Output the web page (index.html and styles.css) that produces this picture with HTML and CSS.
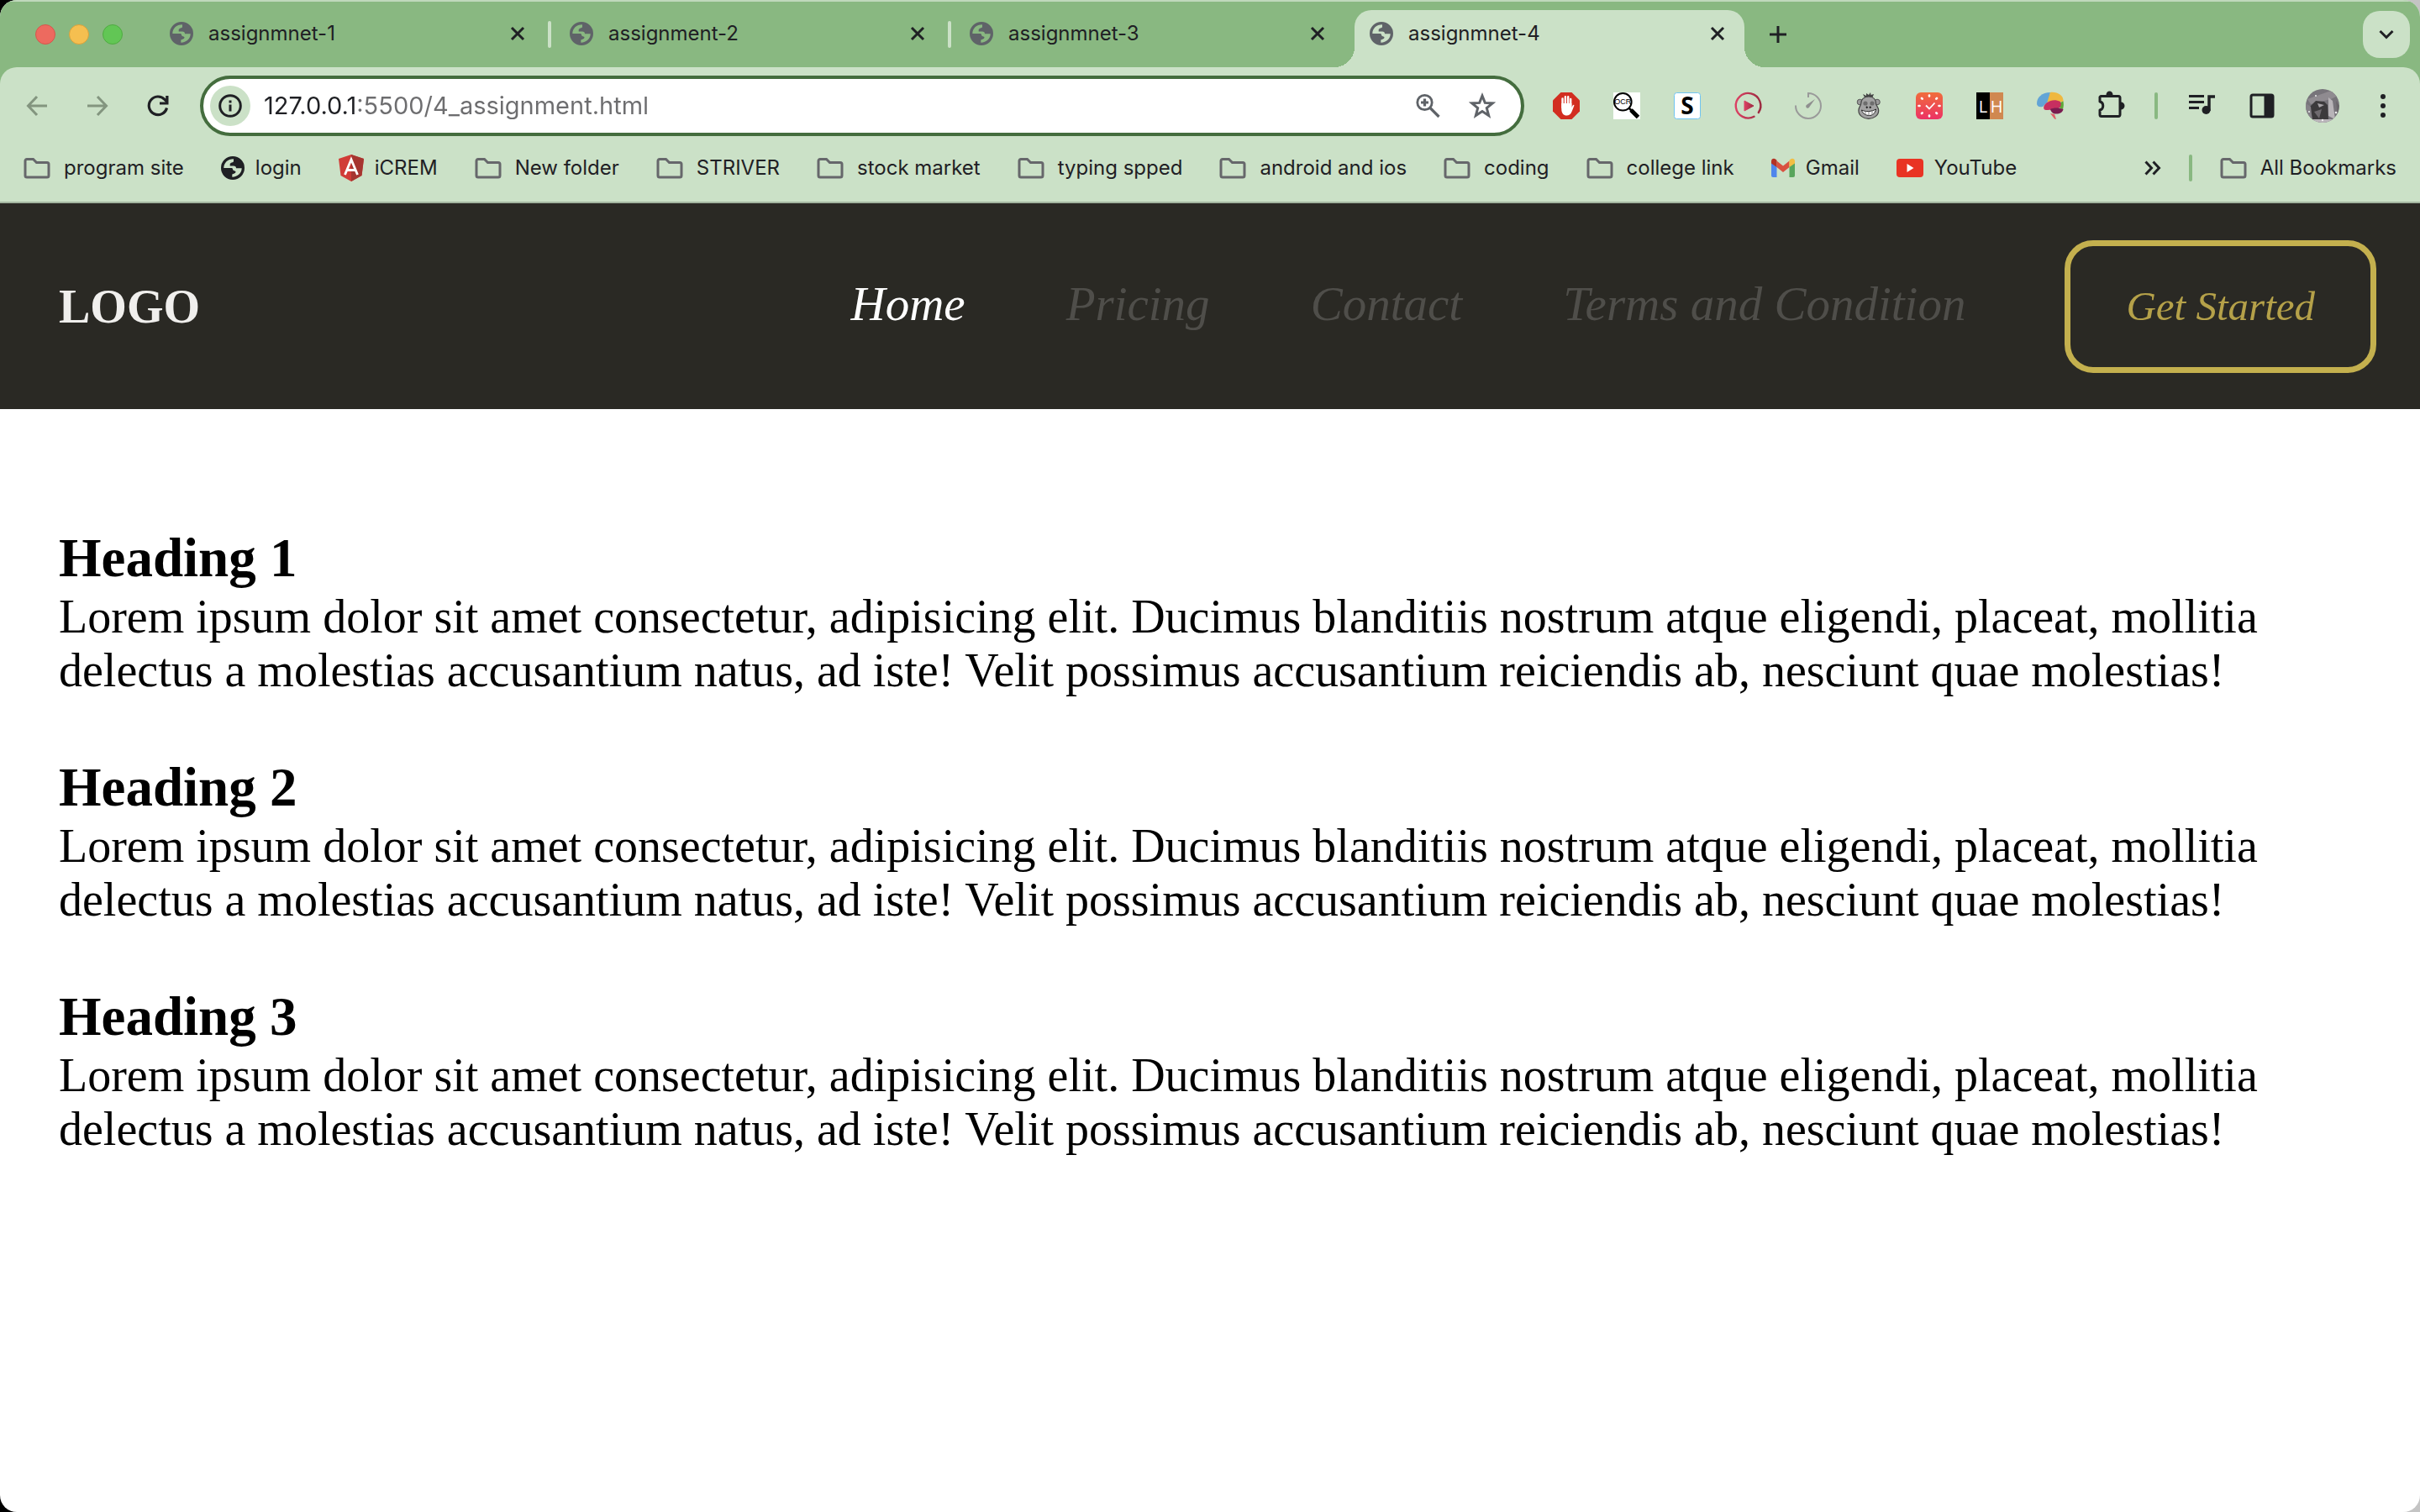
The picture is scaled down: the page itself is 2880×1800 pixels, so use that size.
FILE: index.html
```html
<!DOCTYPE html>
<html lang="en">
<head>
<meta charset="utf-8">
<title>assignmnet-4</title>
<link rel="stylesheet" href="styles.css">
</head>
<body>
<svg class="defs" aria-hidden="true">
  <defs>
    <linearGradient id="sunset" x1="0" y1="0" x2="0" y2="1"><stop offset="0" stop-color="#f06d3c"/><stop offset="1" stop-color="#ec3265"/></linearGradient>
    <linearGradient id="berry"><stop offset="0" stop-color="#dc4164"/><stop offset="1" stop-color="#9c2a40"/></linearGradient>
  </defs>
  <symbol id="globe" viewBox="0 0 28 28"><path fill="currentColor" fill-rule="evenodd" d="M14 0a14 14 0 1 1 0 28 14 14 0 0 1 0-28zM3.300 14C3.300 8 8 3.300 15 3.300V6c0 2-4 1-4.300 3.500v2H15c2 0 3 1 3 2.800h6.700c0 5.700-4.700 10.400-11.400 10.400V22c0-1.500 4.200-1 4.200-3.500 0-1.500-3.500-1-3.500-3 0-1.500-1-1.500-2-1.500z"/></symbol>
  <symbol id="close" viewBox="0 0 20 20"><path d="M3 3l14 14M17 3L3 17" fill="none" stroke="currentColor" stroke-width="3"/></symbol>
  <symbol id="folder" viewBox="0 0 32 26"><path d="M4 2.500h7.500l4 4H28a2 2 0 0 1 2 2V22a2 2 0 0 1-2 2H4a2 2 0 0 1-2-2V4.500a2 2 0 0 1 2-2z" fill="none" stroke="currentColor" stroke-width="3"/></symbol>
</svg>

<div class="window">
  <header class="chrome">
    <div class="tabstrip">
      <div class="lights">
        <button class="light red" aria-label="Close window"></button>
        <button class="light yellow" aria-label="Minimise window"></button>
        <button class="light green" aria-label="Zoom window"></button>
      </div>
      <div class="tabs">
        <div class="tab divided"><svg class="globe"><use href="#globe"/></svg><span class="tab-title">assignmnet-1</span><button class="icon-btn" aria-label="Close tab"><svg class="x"><use href="#close"/></svg></button></div>
        <div class="tab divided"><svg class="globe"><use href="#globe"/></svg><span class="tab-title">assignment-2</span><button class="icon-btn" aria-label="Close tab"><svg class="x"><use href="#close"/></svg></button></div>
        <div class="tab"><svg class="globe"><use href="#globe"/></svg><span class="tab-title">assignmnet-3</span><button class="icon-btn" aria-label="Close tab"><svg class="x"><use href="#close"/></svg></button></div>
        <div class="tab active"><svg class="globe"><use href="#globe"/></svg><span class="tab-title">assignmnet-4</span><button class="icon-btn" aria-label="Close tab"><svg class="x"><use href="#close"/></svg></button></div>
      </div>
      <button class="icon-btn new-tab" aria-label="New tab"><svg class="i20" viewBox="0 0 20 20"><path d="M10 0v20M0 10h20" stroke="currentColor" stroke-width="3"/></svg></button>
      <button class="icon-btn tab-search" aria-label="Search tabs"><svg class="x" viewBox="0 0 20 20"><path d="M2.500 6l7.500 7.500L17.500 6" fill="none" stroke="currentColor" stroke-width="3"/></svg></button>
    </div>

    <div class="toolbar">
      <div class="history">
        <button class="icon-btn faded" aria-label="Back"><svg class="i32" viewBox="0 0 32 32"><path d="M28 16H6M16 5L5.500 16 16 27" fill="none" stroke="currentColor" stroke-width="3"/></svg></button>
        <button class="icon-btn faded" aria-label="Forward"><svg class="i32" viewBox="0 0 32 32"><path d="M4 16h22M16 5l10.500 11L16 27" fill="none" stroke="currentColor" stroke-width="3"/></svg></button>
        <button class="icon-btn" aria-label="Reload"><svg class="i32" viewBox="0 0 32 32"><path d="M26.500 18.500A10.800 10.800 0 1 1 24 8.500l3 3" fill="none" stroke="currentColor" stroke-width="3.200"/><path d="M28.500 4v10.500H18v-3h7.200V4z" fill="currentColor"/></svg></button>
      </div>
      <div class="omnibox">
        <button class="site-info" aria-label="Site information"><svg class="globe" viewBox="0 0 28 28"><circle cx="14" cy="14" r="12.300" fill="none" stroke="currentColor" stroke-width="3"/><path d="M14 12.500v8M14 7.500v3" stroke="currentColor" stroke-width="3"/></svg></button>
        <input class="url" type="text" aria-label="Address" value="127.0.0.1:5500/4_assignment.html">
        <button class="icon-btn grey" aria-label="Page zoom"><svg class="i32" viewBox="0 0 32 32"><circle cx="12.500" cy="12" r="8.700" fill="none" stroke="currentColor" stroke-width="2.800"/><path d="M18.500 18l11 11M12.500 7.500v9M8 12h9" stroke="currentColor" stroke-width="3.200"/></svg></button>
        <button class="icon-btn grey" aria-label="Bookmark this page"><svg class="i32" viewBox="0 0 32 32"><path d="M16 4l3.300 8.400 9 .5-7 5.700 2.400 8.900L16 22.500l-7.700 5 2.400-8.900-7-5.700 9-.5z" fill="none" stroke="currentColor" stroke-width="3"/></svg></button>
      </div>
      <div class="extensions">
        <button class="icon-btn" aria-label="Ad blocker"><svg class="i32" viewBox="0 0 32 32"><path d="M9.500 0h13L32 9.500v13L22.500 32h-13L0 22.500v-13z" fill="#d22d20"/><path d="M11.500 18V7.500M14.900 16V5.200M18.200 16V5.200M21.200 17V8" stroke="#fff" stroke-width="2.400" stroke-linecap="round"/><path d="M10.300 13h12.100v5l1.300-2.500c.8-1.200 2-.8 1.600.4L22.500 23c-1.500 3.500-3.500 4.500-6 4.500-3.500 0-6.200-2.500-6.200-7.500z" fill="#fff"/></svg></button>
        <button class="icon-btn" aria-label="OCR"><svg class="i32" viewBox="0 0 32 32"><path d="M0 0h32v32H0z" fill="#fff"/><circle cx="11.300" cy="11.300" r="10.300" fill="#fff" stroke="#000" stroke-width="2"/><path d="M18.500 18.500l3 3" stroke="#000" stroke-width="2.500"/><path d="M21 21l8.500 8.500" stroke="#000" stroke-width="5"/><text x="11.300" y="14" text-anchor="middle" class="ocr">OCR</text></svg></button>
        <button class="icon-btn" aria-label="S extension"><svg class="i32" viewBox="0 0 32 32"><rect x=".5" y=".5" width="31" height="31" rx="3" fill="#fff" stroke="#6fc4f2"/><text x="16" y="26" text-anchor="middle" class="s-mark">S</text></svg></button>
        <button class="icon-btn" aria-label="Video player"><svg class="i32" viewBox="0 0 32 32"><path d="M23.500 28.800A14.800 14.800 0 1 1 28.800 24" fill="none" stroke="url(#berry)" stroke-width="2.400" stroke-linecap="round"/><path d="M12 10l11 6-11 6z" fill="url(#berry)" stroke="url(#berry)" stroke-linejoin="round"/></svg></button>
        <button class="icon-btn" aria-label="Timer"><svg class="i32" viewBox="0 0 32 32"><path d="M1 15.500A15 15 0 1 0 16 1v5" fill="none" stroke="#9a9a9a" stroke-width="2"/><path d="M24 8l-9.500 6.500a2.200 2.200 0 1 0 3 2.500z" fill="#8f8f8f"/></svg></button>
        <button class="icon-btn" aria-label="Monkey"><svg class="i32" viewBox="0 0 32 32"><path d="M11 6l-2-4 4 2 0-3 3 2 2-3 .5 3L22 2l-1.500 4z" fill="#444"/><circle cx="5.500" cy="11.500" r="3.300" fill="#9a9a9a" stroke="#555"/><circle cx="26" cy="11.500" r="3.300" fill="#9a9a9a" stroke="#555"/><path d="M16 5c5.500 0 8.500 3.500 8.500 8.500 0 2 3.200 4 3.200 8 0 6-5.700 9.800-11.900 9.800S3.900 27.500 3.900 21.500c0-4 2.800-6 2.800-8C6.700 8.500 10 5 16 5z" fill="#a2a2a2" stroke="#444" stroke-width="1.200"/><circle cx="12" cy="13" r="2.600" fill="#6d6d6d"/><circle cx="20" cy="13" r="2.600" fill="#6d6d6d"/><path d="M13 17l1.500 1.500M18.500 17L17 18.500" stroke="#222" stroke-width="2"/><path d="M7.500 21c5 2.500 12 2 17-1-1 5-4 7.500-8 7.500s-8-2.500-9-6.500z" fill="#fff" stroke="#222"/><path d="M12 22.500v4M16 22.500v5M20 22v4.500" stroke="#888"/></svg></button>
        <button class="icon-btn" aria-label="Task clock"><svg class="i32" viewBox="0 0 32 32"><rect width="32" height="32" rx="6" fill="url(#sunset)"/><path d="M16 3.500v1M16 27.500v1M3.500 16h1M27.500 16h1M7 7l.7.700M24.300 24.300l.7.700M7 25l.7-.7M24.300 7.700L25 7" stroke="#fff" stroke-width="2.600" stroke-linecap="round"/><path d="M12 15.500l4 4 6.500-7" fill="none" stroke="#fff" stroke-width="1.800"/></svg></button>
        <button class="icon-btn" aria-label="LH"><svg class="i32" viewBox="0 0 32 32"><path d="M0 0h16v32H0z" fill="#000"/><path d="M16 0h16v32H16z" fill="#d08850"/><text x="8" y="24" text-anchor="middle" class="lh-mark">L</text><text x="24" y="24" text-anchor="middle" class="lh-mark">H</text></svg></button>
        <button class="icon-btn" aria-label="Brain"><svg class="i32" viewBox="0 0 32 32"><path d="M16 0C6 0 0 6 0 13c0 3 2 5 7 4l7-7z" fill="#62a4d6"/><path d="M16 0c8-1 16 3 15.500 11H22l-9.500 0z" fill="#efb83f"/><path d="M31.500 10.500c.5 4 .5 6-.5 9.500l-5-2 2-6z" fill="#5da837"/><path d="M12 12c5-3 10-4 16-1 2 4 0 8-4 8.500-6 .5-10 2.500-15 1-2-3 0-6 3-8.500z" fill="#c72f60"/><path d="M16 20c4-2 10-2 15.500 0-1 4-4 5.500-8.500 5.500-4 0-6-2-7-5.500z" fill="#7a1c50"/><path d="M16 25l5 1 2 6-2-.5z" fill="#e0606a"/></svg></button>
        <button class="icon-btn" aria-label="Extensions"><svg class="i32" viewBox="0 0 32 32"><path d="M4 4.500h21a2 2 0 0 1 2 2V26a2 2 0 0 1-2 2.500H5A2 2 0 0 1 3 26.500V21c5-1 5-9 0-10V5.500z" fill="none" stroke="currentColor" stroke-width="3" stroke-linejoin="round"/><path d="M10.500 3a4 4.500 0 0 1 8 0zM28 11.500a4.500 4.500 0 0 1 0 9z" fill="currentColor"/></svg></button>
      </div>
      <span class="rule"></span>
      <div class="browser-tools">
        <button class="icon-btn" aria-label="Media control"><svg class="i32" viewBox="0 0 32 32"><path d="M1 4.500h18M1 11.500h18M1 18.500h12" stroke="currentColor" stroke-width="3"/><circle cx="21.500" cy="21" r="5" fill="currentColor"/><path d="M25 22V5h7" fill="none" stroke="currentColor" stroke-width="3.500"/></svg></button>
        <button class="icon-btn" aria-label="Side panel"><svg class="i32" viewBox="0 0 32 32"><rect x="3" y="3" width="26" height="26" rx="2" fill="none" stroke="currentColor" stroke-width="3"/><path d="M18.500 3H29v26H18.500z" fill="currentColor"/></svg></button>
        <button class="icon-btn profile" aria-label="Profile"><svg class="avatar" viewBox="0 0 40 40"><clipPath id="round"><circle cx="20" cy="20" r="20"/></clipPath><g clip-path="url(#round)"><path d="M0 0h40v40H0z" fill="#77747a"/><path d="M2 12L30 2l8 6-8 4-24 6z" fill="#8f8b90"/><path d="M4 22l8-8 10 1 4 4 1 17H8z" fill="#3c3a3c"/><path d="M14 17l8 2-6 3z" fill="#a8a4a8"/><path d="M27 10l5 4 3 22-8-4z" fill="#b8b4b8"/><path d="M36 14l4 6-2 12z" fill="#6a666a"/><path d="M10 27l9-3-3 11z" fill="#6f6b6f"/><path d="M0 17l6 4 2 17H0z" fill="#858187"/><path d="M6 36h28v4H6z" fill="#b9b4b9"/><g fill="#eee"><circle cx="4" cy="27" r="1"/><circle cx="36" cy="28" r="1.300"/><circle cx="20" cy="37" r="1.200"/><circle cx="12" cy="8" r="1"/></g></g></svg></button>
        <button class="icon-btn" aria-label="Menu"><svg class="i32" viewBox="0 0 32 32"><g fill="currentColor"><circle cx="16" cy="5" r="3"/><circle cx="16" cy="16" r="3"/><circle cx="16" cy="27" r="3"/></g></svg></button>
      </div>
    </div>

    <nav class="bookmarks" aria-label="Bookmarks">
      <a class="bookmark" href="#"><svg class="folder"><use href="#folder"/></svg>program site</a>
      <a class="bookmark site" href="#"><svg class="globe dark"><use href="#globe"/></svg>login</a>
      <a class="bookmark site" href="#"><svg class="shield" viewBox="0 0 30 32"><path d="M15 0l15 5-2.500 20L15 32 2.500 25 0 5z" fill="#d13c37"/><path d="M15 0l15 5-2.500 20L15 32z" fill="#a63530"/><path d="M7.500 24L15 6l7.500 18M10.500 18.500h9" fill="none" stroke="#fff" stroke-width="2.800"/></svg>iCREM</a>
      <a class="bookmark" href="#"><svg class="folder"><use href="#folder"/></svg>New folder</a>
      <a class="bookmark" href="#"><svg class="folder"><use href="#folder"/></svg>STRIVER</a>
      <a class="bookmark" href="#"><svg class="folder"><use href="#folder"/></svg>stock market</a>
      <a class="bookmark" href="#"><svg class="folder"><use href="#folder"/></svg>typing spped</a>
      <a class="bookmark" href="#"><svg class="folder"><use href="#folder"/></svg>android and ios</a>
      <a class="bookmark" href="#"><svg class="folder"><use href="#folder"/></svg>coding</a>
      <a class="bookmark" href="#"><svg class="folder"><use href="#folder"/></svg>college link</a>
      <a class="bookmark site" href="#"><svg class="globe" viewBox="0 0 28 22"><path d="M0 3v17a2 2 0 0 0 2 2h4.500V9z" fill="#4f86ec"/><path d="M28 3v17a2 2 0 0 1-2 2h-4.500V9z" fill="#58a55c"/><path d="M6.500 2.500L14 8.500l7.500-6V10L14 16 6.500 10z" fill="#d95140"/><path d="M0 3c0-3 3-4 5-2.500l1.500 1.200V10L0 5.500z" fill="#b33225"/><path d="M28 3c0-3-3-4-5-2.500l-1.500 1.200V10L28 5.500z" fill="#f2be42"/></svg>Gmail</a>
      <a class="bookmark site" href="#"><svg class="video" viewBox="0 0 32 22"><rect width="32" height="22" rx="4" fill="#e93323"/><path d="M12.500 6l8 5-8 5z" fill="#fff"/></svg>YouTube</a>
      <button class="icon-btn more" aria-label="More bookmarks"><svg class="x" viewBox="0 0 20 20"><path d="M1.500 2.500l7 7.500-7 7.500M10.500 2.500l7 7.500-7 7.500" fill="none" stroke="currentColor" stroke-width="3"/></svg></button>
      <span class="rule"></span>
      <a class="bookmark" href="#"><svg class="folder"><use href="#folder"/></svg>All Bookmarks</a>
    </nav>
  </header>

  <nav class="site-nav">
    <a class="logo" href="#">LOGO</a>
    <ul class="menu">
      <li><a class="menu-link current" href="#">Home</a></li>
      <li><a class="menu-link" href="#">Pricing</a></li>
      <li><a class="menu-link" href="#">Contact</a></li>
      <li><a class="menu-link" href="#">Terms and Condition</a></li>
    </ul>
    <button class="cta">Get Started</button>
  </nav>

  <main class="content">
    <section class="article">
      <h1 class="title">Heading 1</h1>
      <p class="text">Lorem ipsum dolor sit amet consectetur, adipisicing elit. Ducimus blanditiis nostrum atque eligendi, placeat, mollitia delectus a molestias accusantium natus, ad iste! Velit possimus accusantium reiciendis ab, nesciunt quae molestias!</p>
    </section>
    <section class="article">
      <h1 class="title">Heading 2</h1>
      <p class="text">Lorem ipsum dolor sit amet consectetur, adipisicing elit. Ducimus blanditiis nostrum atque eligendi, placeat, mollitia delectus a molestias accusantium natus, ad iste! Velit possimus accusantium reiciendis ab, nesciunt quae molestias!</p>
    </section>
    <section class="article">
      <h1 class="title">Heading 3</h1>
      <p class="text">Lorem ipsum dolor sit amet consectetur, adipisicing elit. Ducimus blanditiis nostrum atque eligendi, placeat, mollitia delectus a molestias accusantium natus, ad iste! Velit possimus accusantium reiciendis ab, nesciunt quae molestias!</p>
    </section>
  </main>
</div>
</body>
</html>
```

FILE: styles.css
```css
* { box-sizing: border-box; margin: 0; padding: 0; }

body {
  background: linear-gradient(90deg, #000 50%, #c4c4c4 50%);
  color: #000;
  font-family: "Liberation Serif", "Times New Roman", serif;
}

a { color: inherit; text-decoration: none; }
ul { list-style: none; }
svg { display: block; flex: none; }
.defs { position: absolute; width: 0; height: 0; }

.window {
  min-height: 100vh;
  background: #fff;
  border-radius: 20px;
  overflow: hidden;
}

/* Browser frame */
.chrome {
  background: #89b881;
  border-top: 2px solid #c0d9bc;
  color: #1f2024;
  font-family: Inter, "Liberation Sans", sans-serif;
  font-size: 24px;
  line-height: 32px;
}

.icon-btn {
  display: flex;
  align-items: center;
  justify-content: center;
  flex: none;
  border: 0;
  background: none;
  color: #1f2024;
}
.icon-btn.grey { color: #5f6368; }
.icon-btn.faded { color: #83957f; }
.i20, .x { width: 20px; height: 20px; }
.i32 { width: 32px; height: 32px; overflow: visible; }
.globe { width: 28px; height: 28px; color: #5f6368; }
.globe.dark { color: #1f2024; }
.avatar { width: 40px; height: 40px; }

.tabstrip { display: flex; align-items: center; height: 78px; padding-right: 12px; }
.lights { display: flex; gap: 16px; width: 180px; padding-left: 42px; flex: none; }
.light { width: 24px; height: 24px; border-radius: 50%; border: 1px solid; }
.light.red { background: #ed6a5f; border-color: #d5574c; }
.light.yellow { background: #f5bf50; border-color: #d8a13c; }
.light.green { background: #62c655; border-color: #50ab42; }

.tabs { display: flex; align-self: stretch; min-width: 0; }
.tab {
  position: relative;
  display: flex;
  align-items: center;
  gap: 18px;
  width: 476px;
  height: 76px;
  padding: 0 30px 0 22px;
}
.tab-title { flex: 1; }
.divided::after {
  content: "";
  position: absolute;
  right: 0;
  top: 23px;
  width: 4px;
  height: 32px;
  border-radius: 2px;
  background: #cbe1c7;
}
.tab.active {
  width: 464px;
  height: 68px;
  margin: 10px 0 0 4px;
  padding: 0 22px 12px 18px;
  border-radius: 20px 20px 0 0;
  background: #cbe1c7;
}
.active::before, .active::after {
  content: "";
  position: absolute;
  bottom: 0;
  width: 24px;
  height: 24px;
}
.active::before { right: 100%; background: radial-gradient(circle at 0 0, transparent 24px, #cbe1c7 24px); }
.active::after { left: 100%; background: radial-gradient(circle at 100% 0, transparent 24px, #cbe1c7 24px); }
.new-tab { margin-left: 30px; }
.tab-search { width: 56px; height: 56px; margin-left: auto; border-radius: 20px; background: #cbe1c7; }

.toolbar {
  display: flex;
  align-items: center;
  gap: 36px;
  height: 92px;
  padding: 0 28px;
  border-radius: 20px 20px 0 0;
  background: #cbe1c7;
}
.history, .extensions, .browser-tools { display: flex; align-items: center; gap: 40px; }
.profile { margin: 0 -4px; }
.omnibox {
  display: flex;
  align-items: center;
  gap: 33px;
  flex: 1;
  height: 72px;
  margin: 0 -2px;
  padding: 0 30px 0 8px;
  border: 4px solid #446d3e;
  border-radius: 36px;
  background: #fff;
}
.site-info {
  display: grid;
  place-items: center;
  width: 48px;
  height: 48px;
  margin-right: -17px;
  border: 0;
  border-radius: 50%;
  background: #cbe1c7;
}
.site-info .globe { color: #1f2024; }
.url {
  flex: 1;
  min-width: 0;
  border: 0;
  outline: 0;
  font: inherit;
  font-size: 29px;
  color: transparent;
  background: linear-gradient(90deg, #1f2024 111px, #6d6d6f 111px);
  -webkit-background-clip: text;
  background-clip: text;
}
.rule { width: 4px; height: 32px; border-radius: 2px; background: #89b881; }
.ocr { font: 9px "Liberation Sans", sans-serif; }
.s-mark { font: bold 28px "Open Sans", sans-serif; }
.lh-mark { font: 20px "Open Sans", sans-serif; fill: #fff; }

.bookmarks {
  display: flex;
  align-items: center;
  gap: 44px;
  height: 70px;
  padding: 0 28px 12px;
  border-bottom: 2px solid #a3b5a0;
  background: #cbe1c7;
  white-space: nowrap;
}
.bookmark { display: flex; align-items: center; gap: 16px; }
.bookmark.site { gap: 13px; }
.folder { width: 32px; height: 26px; color: #66676b; }
.shield { width: 30px; height: 32px; }
.video { width: 32px; height: 22px; }
.more { margin-left: auto; margin-right: -11px; }
.bookmarks .rule { margin-right: -11px; }

/* Page */
.site-nav {
  display: flex;
  align-items: center;
  gap: 118px;
  padding: 44px 52px 43px 70px;
  background: #2a2924;
}
.logo { color: #f0efed; font-size: 56px; line-height: 64px; font-weight: bold; }
.menu { display: flex; gap: 120px; margin-left: auto; padding-bottom: 6px; }
.menu-link {
  color: #4f4e4a;
  font: italic 57px/64px "Apple Chancery", "Liberation Serif", serif;
}
.menu-link.current { color: #fff; }
.cta {
  padding: 40px 66px;
  border: 7px solid #c4b04e;
  border-radius: 34px;
  background: transparent;
  color: #b5a149;
  font: italic 49px/64px "Apple Chancery", "Liberation Serif", serif;
}

.content { display: grid; gap: 69px; padding: 139px 70px 70px; }
.title { font-size: 65px; line-height: 76px; }
.text { font-size: 56px; line-height: 64px; }
```
